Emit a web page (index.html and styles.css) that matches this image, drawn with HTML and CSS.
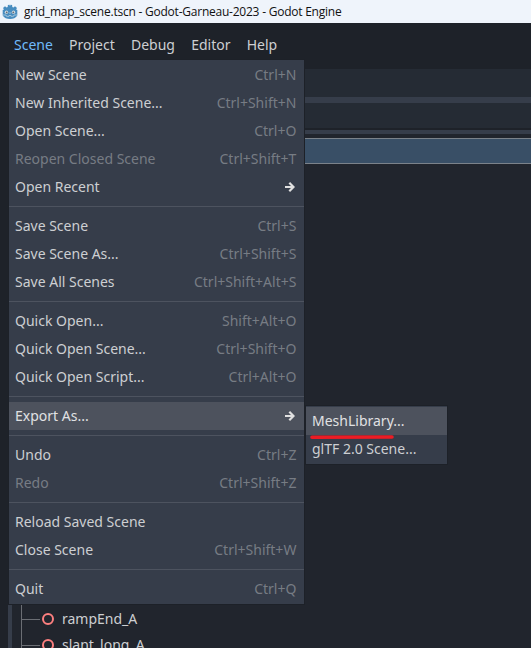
FILE: index.html
```html
<!DOCTYPE html>
<html lang="en">
<head>
<meta charset="utf-8">
<title>grid_map_scene.tscn - Godot-Garneau-2023 - Godot Engine</title>
<link rel="stylesheet" href="styles.css">
</head>
<body>
<div class="window">
  <header class="titlebar">
    <svg class="logo" viewBox="0 0 16 16"><path fill="#478cbf" d="M1 4 3 2.2 4.6 3.4 5.7 3 5.9 1 7.5.7 8 2.3 8.5.7 10.1 1 10.3 3 11.4 3.4 13 2.2 15 4 14 5.6 15.3 6V11.5C14 14 11 15 8 15S2 14 .7 11.5V6L2 5.6Z"/><circle cx="4.5" cy="8.3" r="1.7" fill="#d5dfe7"/><circle cx="11.5" cy="8.3" r="1.7" fill="#d5dfe7"/><circle cx="4.7" cy="8.4" r=".9" fill="#606b75"/><circle cx="11.3" cy="8.4" r=".9" fill="#606b75"/><path stroke="#b5cfe2" stroke-width=".8" fill="none" d="M8 8V10M1 11H4L4.5 12.3H7V11.5H9V12.3H11.5L12 11H15"/></svg>
    <span class="title">grid_map_scene.tscn - Godot-Garneau-2023 - Godot Engine</span>
  </header>
  <nav class="menubar">
    <span class="active">Scene</span><span>Project</span><span>Debug</span><span>Editor</span><span>Help</span>
  </nav>
  <main class="workspace">
    <div class="tabs"></div>
    <div class="divider"></div>
    <div class="toolbar"></div>
    <div class="panel-edge"></div>
    <div class="selected-row"></div>
    <div class="tree">
      <div class="node"><i class="ring"></i>rampEnd_A</div>
      <div class="node"><i class="ring"></i>slant_long_A</div>
    </div>
  </main>
  <div class="menu scene-menu">
    <div class="item"><span>New Scene</span><kbd>Ctrl+N</kbd></div>
    <div class="item"><span>New Inherited Scene...</span><kbd>Ctrl+Shift+N</kbd></div>
    <div class="item"><span>Open Scene...</span><kbd>Ctrl+O</kbd></div>
    <div class="item disabled"><span>Reopen Closed Scene</span><kbd>Ctrl+Shift+T</kbd></div>
    <div class="item"><span>Open Recent</span><svg class="arrow" viewBox="0 0 10 10"><path d="M0 5H8.3M4.3.8 8.5 5 4.3 9.2"/></svg></div>
    <div class="separator"></div>
    <div class="item"><span>Save Scene</span><kbd>Ctrl+S</kbd></div>
    <div class="item"><span>Save Scene As...</span><kbd>Ctrl+Shift+S</kbd></div>
    <div class="item"><span>Save All Scenes</span><kbd>Ctrl+Shift+Alt+S</kbd></div>
    <div class="separator"></div>
    <div class="item"><span>Quick Open...</span><kbd>Shift+Alt+O</kbd></div>
    <div class="item"><span>Quick Open Scene...</span><kbd>Ctrl+Shift+O</kbd></div>
    <div class="item"><span>Quick Open Script...</span><kbd>Ctrl+Alt+O</kbd></div>
    <div class="separator"></div>
    <div class="item hover"><span>Export As...</span><svg class="arrow" viewBox="0 0 10 10"><path d="M0 5H8.3M4.3.8 8.5 5 4.3 9.2"/></svg></div>
    <div class="separator"></div>
    <div class="item"><span>Undo</span><kbd>Ctrl+Z</kbd></div>
    <div class="item disabled"><span>Redo</span><kbd>Ctrl+Shift+Z</kbd></div>
    <div class="separator"></div>
    <div class="item"><span>Reload Saved Scene</span></div>
    <div class="item"><span>Close Scene</span><kbd>Ctrl+Shift+W</kbd></div>
    <div class="separator"></div>
    <div class="item"><span>Quit</span><kbd>Ctrl+Q</kbd></div>
  </div>
  <div class="menu submenu">
    <div class="item hover"><span>MeshLibrary...</span></div>
    <div class="item"><span>glTF 2.0 Scene...</span></div>
    <svg class="underline" viewBox="0 0 85 6"><path d="M2 3.2 82 3"/></svg>
  </div>
</div>
</body>
</html>
```
FILE: styles.css
```css
* { box-sizing: border-box; }
body { margin: 0; background: #1e2229; }
.window {
  position: relative;
  display: flex;
  flex-direction: column;
  width: 531px;
  height: 648px;
  overflow: hidden;
  font: 14px/28px "Noto Sans", sans-serif;
  color: #cdcfd2;
}
.titlebar {
  display: flex;
  align-items: center;
  flex: none;
  height: 23px;
  padding-left: 2px;
  background: #eff4fb;
  color: #111;
}
.logo { width: 16px; height: 16px; margin-right: 6px; }
.title { font: 12px/22px "Open Sans", sans-serif; letter-spacing: -0.23px; white-space: nowrap; }
.menubar {
  display: flex;
  flex: none;
  gap: 16.2px;
  height: 46px;
  padding: 8px 14px 0;
}
.active { color: #70bafa; }
.workspace {
  display: flex;
  flex-direction: column;
  flex: 1;
  margin-left: 8px;
  border-left: 4px solid #363d4a;
  background: #21252d;
}
.tabs { height: 28px; background: #252b34; }
.divider { height: 6px; background: #363d4a; }
.toolbar { height: 25px; background: #252b34; }
.panel-edge {
  height: 10px;
  border: solid #1e2229;
  border-width: 2px 0 4px;
  border-bottom-color: #21252d;
  background: #363d4a;
}
.selected-row {
  height: 26px;
  border: solid #7b828a;
  border-width: 1px 0;
  background: #394f66;
}
.tree {
  flex: 1;
  margin-left: 9px;
  padding-top: 442px;
  border-left: 1px solid #6b6e74;
}
.node { display: flex; align-items: center; height: 26px; }
.node::before { content: ""; width: 18px; height: 1px; background: #6b6e74; }
.ring {
  width: 12px;
  height: 12px;
  margin: 0 8px 0 2px;
  border: 2px solid #fc7f7f;
  border-radius: 50%;
}
.menu { position: absolute; background: #363d4a; box-shadow: 0 0 0 1px #1d2128; }
.scene-menu { left: 9px; top: 60px; width: 295px; height: 544px; padding: 1px 0; }
.item {
  display: flex;
  justify-content: space-between;
  align-items: center;
  height: 28px;
  padding: 0 7.6px 0 6px;
  white-space: nowrap;
}
.item kbd { font: inherit; color: #777c84; }
.disabled { color: #777c84; }
.hover { background: #4d525d; color: #e0e1e3; }
.arrow {
  width: 10px;
  height: 10px;
  margin-right: 1.4px;
  fill: none;
  stroke: #e0e0e0;
  stroke-width: 2.2;
}
.separator { height: 11px; padding: 5px 0; }
.separator::before { content: ""; display: block; height: 1px; background: #4d535f; }
.submenu { left: 306px; top: 406px; width: 141px; height: 58px; padding: 1px 0; }
.underline {
  position: absolute;
  left: 4px;
  top: 28px;
  width: 85px;
  height: 6px;
  fill: none;
  stroke: #ec1c24;
  stroke-width: 3.6;
  stroke-linecap: round;
}
```
